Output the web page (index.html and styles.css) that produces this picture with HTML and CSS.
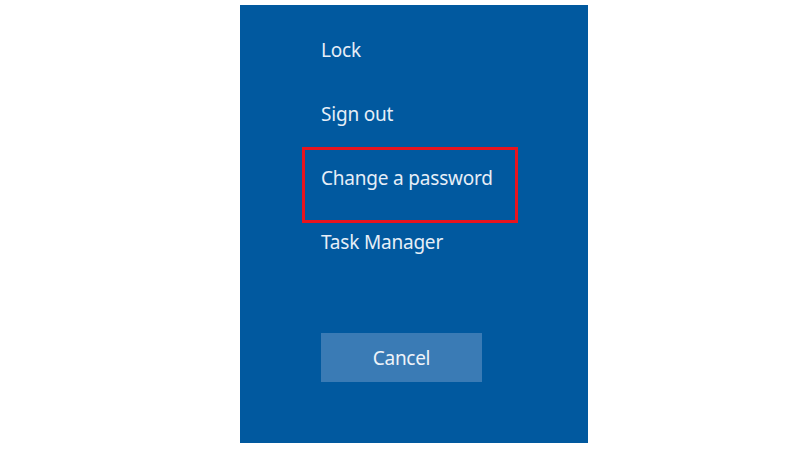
FILE: index.html
```html
<!DOCTYPE html>
<html>
<head>
<meta charset="utf-8">
<link rel="stylesheet" href="styles.css">
</head>
<body>
<div class="panel">
  <ul class="menu">
    <li class="item">Lock</li>
    <li class="item">Sign out</li>
    <li class="item highlighted">Change a password</li>
    <li class="item">Task Manager</li>
  </ul>
  <button class="cancel">Cancel</button>
</div>
</body>
</html>
```
FILE: styles.css
```css
html, body {
  margin: 0;
  padding: 0;
  background: #ffffff;
}
body {
  width: 800px;
  height: 450px;
  display: flex;
  justify-content: center;
  align-items: flex-start;
  font-family: "Noto Sans", "Open Sans", sans-serif;
}
.panel {
  margin-top: 5px;
  margin-left: 28px;
  width: 348px;
  height: 438px;
  background: #01599f;
  box-sizing: border-box;
  padding: 30px 0 0 81px;
  display: flex;
  flex-direction: column;
}
.menu {
  list-style: none;
  margin: 0;
  padding: 0;
  display: flex;
  flex-direction: column;
}
.item {
  color: #e6eef7;
  font-size: 19px;
  line-height: 30px;
  height: 64px;
  letter-spacing: -0.2px;
}
.highlighted {
  position: relative;
}
.highlighted::before {
  content: "";
  position: absolute;
  left: -19px;
  top: -16px;
  width: 216px;
  height: 76px;
  border: 3px solid #e8141e;
  box-sizing: border-box;
}
.cancel {
  margin-top: 42px;
  width: 161px;
  height: 49px;
  background: #3a7bb5;
  border: none;
  color: #eef3f9;
  font-family: "Noto Sans", "Open Sans", sans-serif;
  font-size: 19px;
  letter-spacing: -0.3px;
  padding: 0;
}
```
